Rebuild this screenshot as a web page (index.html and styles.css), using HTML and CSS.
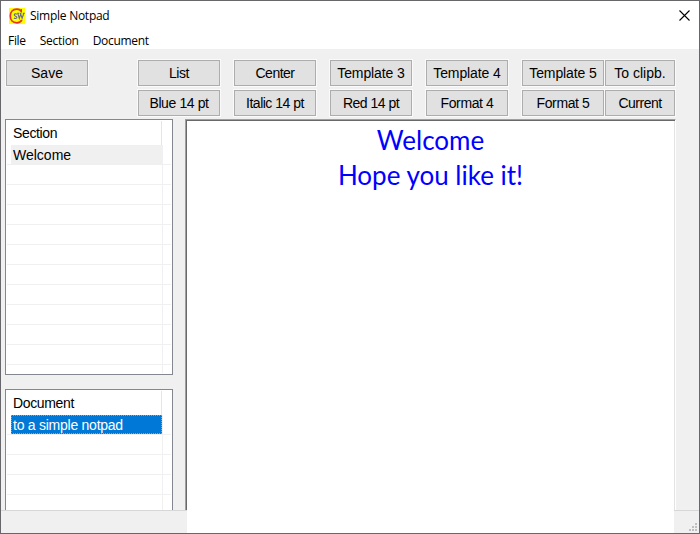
FILE: index.html
```html
<!DOCTYPE html>
<html lang="en">
<head>
<meta charset="utf-8">
<title>Simple Notpad</title>
<link rel="stylesheet" href="styles.css">
</head>
<body>
<div class="window">
  <header class="titlebar">
    <svg class="logo" width="16" height="16" viewBox="0 0 16 16">
      <rect width="16" height="16" fill="#ff0"/>
      <path d="M12.300 3.600C11.600 1.700 9.800 1.100 7.800 1.100C3.800 1.100 1.300 4 1.300 8.100C1.300 12 3.800 14.800 7.800 14.800C10 14.800 11.900 13.900 12.800 11.900" fill="none" stroke="#e0352b" stroke-width="1.700"/>
      <path d="M12.500 1v3.500" stroke="#e0352b"/>
      <path d="M8 6.200C6.500 5.200 5 6 5.300 7.200C5.600 8.400 8 8 7.900 9.500C7.700 10.800 5.800 10.700 5 9.800M8.800 5.300l1.500 5 1.400-4.300 1.400 4.300 1.700-5M8.200 5.300h2M10.800 5.300h1.600M13.800 5.300h2" fill="none" stroke="#66669a" stroke-width="1.100"/>
    </svg>
    <span class="title">Simple Notpad</span>
    <svg class="close" width="11" height="11" viewBox="0 0 11 11"><path d="M.5.5l10 10M10.500.5l-10 10" stroke="#000" stroke-width="1.100"/></svg>
  </header>
  <nav class="menu"><span class="m-file">File</span><span class="m-section">Section</span><span class="m-document">Document</span></nav>
  <div class="toolbar">
    <button class="save">Save</button>
    <button class="list">List</button>
    <button class="center">Center</button>
    <button class="template">Template 3</button>
    <button class="template">Template 4</button>
    <button class="template">Template 5</button>
    <button class="clip">To clipb.</button>
    <button class="blue">Blue 14 pt</button>
    <button class="italic">Italic 14 pt</button>
    <button class="red">Red 14 pt</button>
    <button class="format">Format 4</button>
    <button class="format">Format 5</button>
    <button class="current">Current</button>
  </div>
  <main class="content">
    <aside class="sidebar">
      <section class="listview sections">
        <div class="head"><span class="t-section">Section</span></div>
        <div class="rows"><div class="row muted"><span class="t-welcome">Welcome</span></div></div>
      </section>
      <section class="listview documents">
        <div class="head"><span class="t-document">Document</span></div>
        <div class="rows"><div class="row selected"><span class="t-simple">to a simple notpad</span></div></div>
      </section>
    </aside>
    <article class="editor">
      <p class="e-welcome">Welcome</p>
      <p class="e-hope">Hope you like it!</p>
    </article>
  </main>
  <footer class="status">
    <div class="status-left"></div>
    <div class="status-page"></div>
    <div class="status-right">
      <svg width="8" height="8" viewBox="0 0 8 8" fill="#bfbfbf"><path d="M6 0h2v2H6zM3 3h2v2H3zM6 3h2v2H6zM0 6h2v2H0zM3 6h2v2H3zM6 6h2v2H6z"/></svg>
    </div>
  </footer>
</div>
</body>
</html>
```
FILE: styles.css
```css
* { box-sizing: border-box; }
body { margin: 0; }
.window {
  width: 700px; height: 534px;
  display: flex; flex-direction: column;
  border: 1px solid #66666b;
  background: #f0f0f0; color: #000;
  font: 14px/18px "Liberation Sans", sans-serif;
  overflow: hidden; white-space: nowrap;
}
.titlebar {
  height: 30px; flex: none; display: flex; align-items: center;
  padding: 0 9px 2px 8px; background: #fff;
  font: 12px/16px "Open Sans", sans-serif;
}
.title { margin: 1px 0 0 5px; flex: 1; letter-spacing: -0.26px; }
.logo, .close { display: block; }
.logo { margin-top: 1px; }
.menu {
  height: 18px; flex: none; display: flex; gap: 14px;
  padding: 1px 0 0 7px; background: #fff;
  font: 12px/17px "Open Sans", sans-serif;
  letter-spacing: -0.3px;
}
.toolbar {
  flex: none; display: grid;
  grid-template-columns: 132px 96px 96px 96px 96px 83px 70px;
  grid-template-rows: 26px 26px;
  row-gap: 4px;
  padding: 11px 0 3px 5px;
}
button {
  width: 82px; height: 26px; padding: 0;
  border: 1px solid #adadad; background: #e1e1e1;
  box-shadow: 0 0 0 1px #fafafa;
  font: inherit; color: #000;
}
.clip, .current { width: 70px; }
.list, .blue, .format { letter-spacing: -0.4px; }
.center, .italic, .red, .current { letter-spacing: -0.5px; }
.template { letter-spacing: -0.1px; }
.blue { grid-column: 2; }
.content { height: 391px; flex: none; display: flex; }
.sidebar {
  width: 168px; margin-left: 4px;
  display: grid; grid-template-rows: 256px 121px; gap: 14px;
}
.listview {
  display: flex; flex-direction: column;
  border: 1px solid #828790; background: #fff;
  padding: 1px; overflow: hidden;
}
.documents { border-bottom: 0; padding-bottom: 0; }
.head {
  width: 155px; height: 24px; flex: none;
  border-right: 1px solid #e5e5e5;
  padding: 3px 0 0 6px;
}
.t-section, .t-document { letter-spacing: -0.35px; }
.t-simple { letter-spacing: -0.25px; }
.rows {
  flex: 1;
  background:
    linear-gradient(#f0f0f0, #f0f0f0) 155px 0 / 1px 100% no-repeat,
    repeating-linear-gradient(transparent 0 19px, #f0f0f0 19px 20px);
}
.row { width: 152px; height: 20px; margin-left: 4px; padding-left: 2px; line-height: 20px; }
.muted { background: #f0f0f0; }
.selected {
  width: 151px; height: 19px; background: #0078d7; color: #fff;
  outline: 1px dotted #ff8728; outline-offset: -1px;
}
.editor {
  width: 491px; margin-left: 12px;
  border: solid; border-width: 1px 1px 0; border-color: #a0a0a0 #fff #a0a0a0 #a0a0a0;
  background: #fff; box-shadow: inset 1px 1px #696969, inset -1px 0 #e3e3e3;
  color: #00f; text-align: center;
  font: 26px/35px "Lato", sans-serif;
}
.editor p { margin: 0; }
.e-welcome { padding-top: 3px; }
.status { flex: 1; display: flex; }
.status-left { width: 186px; border-top: 1px solid #d7d7d7; }
.status-page { width: 487px; background: #fff; }
.status-right {
  flex: 1; border-top: 1px solid #d7d7d7;
  display: flex; justify-content: flex-end; align-items: flex-end;
  padding: 0 2px 2px 0;
}
```
